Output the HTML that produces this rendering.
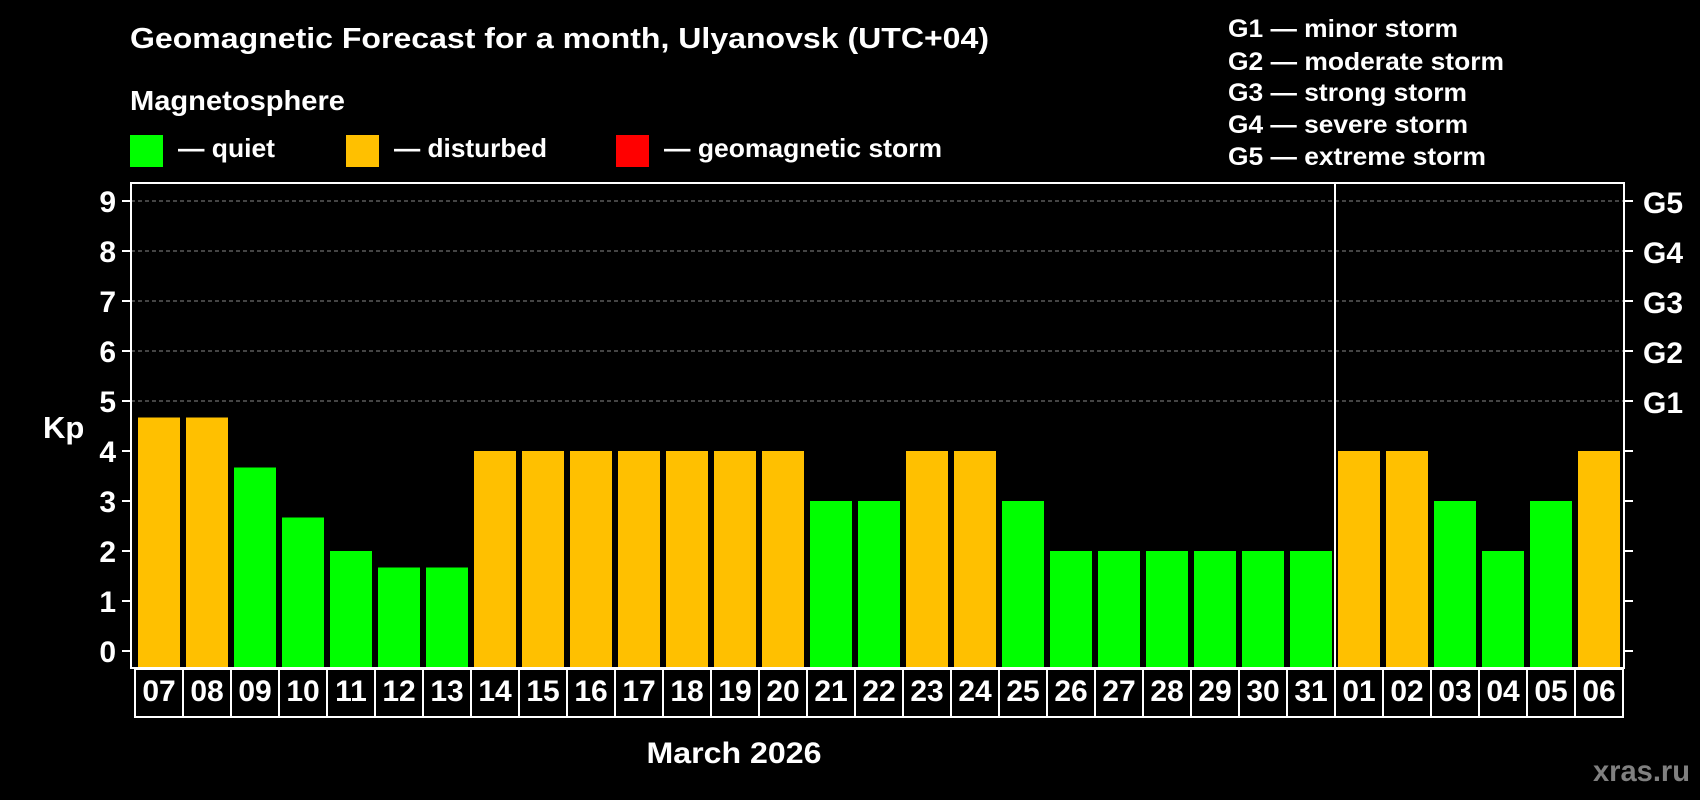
<!DOCTYPE html>
<html><head><meta charset="utf-8"><style>
html,body{margin:0;padding:0;background:#000;width:1700px;height:800px;overflow:hidden}
svg{display:block}
text{font-family:"Liberation Sans",Arial,sans-serif;font-weight:bold;fill:#fff}
</style></head><body>
<svg width="1700" height="800" viewBox="0 0 1700 800" xmlns="http://www.w3.org/2000/svg">
<text x="130" y="48" font-size="29" textLength="859" lengthAdjust="spacingAndGlyphs">Geomagnetic Forecast for a month, Ulyanovsk (UTC+04)</text>
<text x="130" y="110" font-size="28" textLength="215" lengthAdjust="spacingAndGlyphs">Magnetosphere</text>
<rect x="130" y="135" width="33" height="32" fill="#00ff00"/>
<rect x="346" y="135" width="33" height="32" fill="#ffc000"/>
<rect x="616" y="135" width="33" height="32" fill="#ff0000"/>
<text x="178" y="157" font-size="26" textLength="97" lengthAdjust="spacingAndGlyphs">— quiet</text>
<text x="394" y="157" font-size="26" textLength="153" lengthAdjust="spacingAndGlyphs">— disturbed</text>
<text x="664" y="157" font-size="26" textLength="278" lengthAdjust="spacingAndGlyphs">— geomagnetic storm</text>
<g font-size="25">
<text x="1228" y="37" textLength="230" lengthAdjust="spacingAndGlyphs">G1 — minor storm</text>
<text x="1228" y="70" textLength="276" lengthAdjust="spacingAndGlyphs">G2 — moderate storm</text>
<text x="1228" y="101" textLength="239" lengthAdjust="spacingAndGlyphs">G3 — strong storm</text>
<text x="1228" y="133" textLength="240" lengthAdjust="spacingAndGlyphs">G4 — severe storm</text>
<text x="1228" y="165" textLength="258" lengthAdjust="spacingAndGlyphs">G5 — extreme storm</text>
</g>
<g stroke="#888" stroke-width="1" stroke-dasharray="4,3">
<line x1="131" y1="201" x2="1624" y2="201"/>
<line x1="131" y1="251" x2="1624" y2="251"/>
<line x1="131" y1="301" x2="1624" y2="301"/>
<line x1="131" y1="351" x2="1624" y2="351"/>
<line x1="131" y1="401" x2="1624" y2="401"/>
</g>
<g>
<rect x="138" y="417.5" width="42" height="249.5" fill="#ffc000"/>
<rect x="186" y="417.5" width="42" height="249.5" fill="#ffc000"/>
<rect x="234" y="467.5" width="42" height="199.5" fill="#00ff00"/>
<rect x="282" y="517.5" width="42" height="149.5" fill="#00ff00"/>
<rect x="330" y="551" width="42" height="116" fill="#00ff00"/>
<rect x="378" y="567.5" width="42" height="99.5" fill="#00ff00"/>
<rect x="426" y="567.5" width="42" height="99.5" fill="#00ff00"/>
<rect x="474" y="451" width="42" height="216" fill="#ffc000"/>
<rect x="522" y="451" width="42" height="216" fill="#ffc000"/>
<rect x="570" y="451" width="42" height="216" fill="#ffc000"/>
<rect x="618" y="451" width="42" height="216" fill="#ffc000"/>
<rect x="666" y="451" width="42" height="216" fill="#ffc000"/>
<rect x="714" y="451" width="42" height="216" fill="#ffc000"/>
<rect x="762" y="451" width="42" height="216" fill="#ffc000"/>
<rect x="810" y="501" width="42" height="166" fill="#00ff00"/>
<rect x="858" y="501" width="42" height="166" fill="#00ff00"/>
<rect x="906" y="451" width="42" height="216" fill="#ffc000"/>
<rect x="954" y="451" width="42" height="216" fill="#ffc000"/>
<rect x="1002" y="501" width="42" height="166" fill="#00ff00"/>
<rect x="1050" y="551" width="42" height="116" fill="#00ff00"/>
<rect x="1098" y="551" width="42" height="116" fill="#00ff00"/>
<rect x="1146" y="551" width="42" height="116" fill="#00ff00"/>
<rect x="1194" y="551" width="42" height="116" fill="#00ff00"/>
<rect x="1242" y="551" width="42" height="116" fill="#00ff00"/>
<rect x="1290" y="551" width="42" height="116" fill="#00ff00"/>
<rect x="1338" y="451" width="42" height="216" fill="#ffc000"/>
<rect x="1386" y="451" width="42" height="216" fill="#ffc000"/>
<rect x="1434" y="501" width="42" height="166" fill="#00ff00"/>
<rect x="1482" y="551" width="42" height="116" fill="#00ff00"/>
<rect x="1530" y="501" width="42" height="166" fill="#00ff00"/>
<rect x="1578" y="451" width="42" height="216" fill="#ffc000"/>
</g>
<g stroke="#fff" stroke-width="2" fill="none">
<rect x="131" y="183" width="1493" height="485"/>
<line x1="1335" y1="183" x2="1335" y2="668"/>
<rect x="135" y="669" width="1488" height="48"/>
<path d="M183 669V717M231 669V717M279 669V717M327 669V717M375 669V717M423 669V717M471 669V717M519 669V717M567 669V717M615 669V717M663 669V717M711 669V717M759 669V717M807 669V717M855 669V717M903 669V717M951 669V717M999 669V717M1047 669V717M1095 669V717M1143 669V717M1191 669V717M1239 669V717M1287 669V717M1335 669V717M1383 669V717M1431 669V717M1479 669V717M1527 669V717M1575 669V717"/>
<path d="M122 201H131M122 251H131M122 301H131M122 351H131M122 401H131M122 451H131M122 501H131M122 551H131M122 601H131M122 651H131M1624 201H1633M1624 251H1633M1624 301H1633M1624 351H1633M1624 401H1633M1624 451H1633M1624 501H1633M1624 551H1633M1624 601H1633M1624 651H1633"/>
</g>
<g font-size="30" text-anchor="end">
<text x="116" y="212">9</text><text x="116" y="262">8</text><text x="116" y="312">7</text><text x="116" y="362">6</text><text x="116" y="412">5</text><text x="116" y="462">4</text><text x="116" y="512">3</text><text x="116" y="562">2</text><text x="116" y="612">1</text><text x="116" y="662">0</text>
</g>
<g font-size="30">
<text x="1643" y="213">G5</text><text x="1643" y="263">G4</text><text x="1643" y="313">G3</text><text x="1643" y="363">G2</text><text x="1643" y="413">G1</text>
</g>
<text x="43" y="438" font-size="31">Kp</text>
<g font-size="30" text-anchor="middle">
<text x="159" y="701">07</text><text x="207" y="701">08</text><text x="255" y="701">09</text><text x="303" y="701">10</text><text x="351" y="701">11</text><text x="399" y="701">12</text><text x="447" y="701">13</text><text x="495" y="701">14</text><text x="543" y="701">15</text><text x="591" y="701">16</text><text x="639" y="701">17</text><text x="687" y="701">18</text><text x="735" y="701">19</text><text x="783" y="701">20</text><text x="831" y="701">21</text><text x="879" y="701">22</text><text x="927" y="701">23</text><text x="975" y="701">24</text><text x="1023" y="701">25</text><text x="1071" y="701">26</text><text x="1119" y="701">27</text><text x="1167" y="701">28</text><text x="1215" y="701">29</text><text x="1263" y="701">30</text><text x="1311" y="701">31</text><text x="1359" y="701">01</text><text x="1407" y="701">02</text><text x="1455" y="701">03</text><text x="1503" y="701">04</text><text x="1551" y="701">05</text><text x="1599" y="701">06</text>
</g>
<text x="734" y="763" font-size="30" text-anchor="middle" textLength="175" lengthAdjust="spacingAndGlyphs">March 2026</text>
<text x="1593" y="781" font-size="30" style="fill:#808080" textLength="97" lengthAdjust="spacingAndGlyphs">xras.ru</text>
</svg>
</body></html>
